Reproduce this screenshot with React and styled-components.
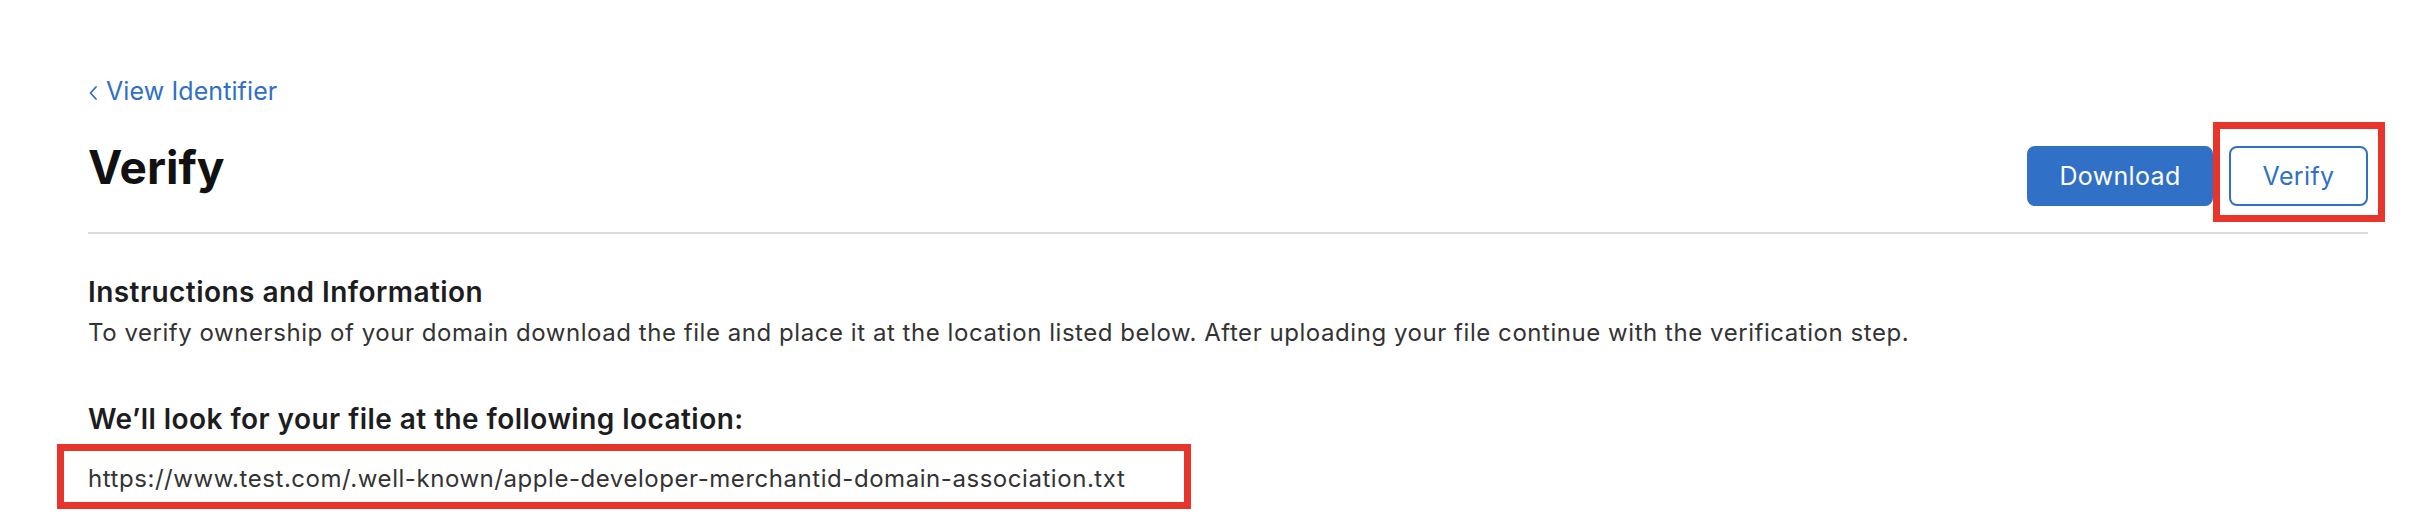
import React from "react";
import styled, { createGlobalStyle } from "styled-components";

const GlobalStyle = createGlobalStyle`
  html, body {
    margin: 0;
    padding: 0;
    background: #fff;
  }
  body {
    font-family: Inter, "Noto Sans", "Liberation Sans", sans-serif;
    color: #1d1d1f;
    -webkit-font-smoothing: antialiased;
  }
`;

const Page = styled.main`
  padding: 75px 58px 0 88px;
`;

const BackLink = styled.a`
  display: inline-flex;
  align-items: center;
  gap: 8px;
  font-size: 25px;
  line-height: 32px;
  letter-spacing: 0.1px;
  color: #3070c6;
  text-decoration: none;
  cursor: pointer;
  svg {
    width: 10px;
    height: 16px;
    margin-top: 3px;
  }
`;

const Header = styled.div`
  display: flex;
  justify-content: space-between;
  align-items: flex-start;
  padding: 32px 0 26px;
  border-bottom: 2px solid #dcdcdc;
`;

const Title = styled.h1`
  margin: 0;
  font-size: 46px;
  line-height: 56px;
  font-weight: 700;
  color: #111;
`;

const Actions = styled.div`
  display: flex;
  gap: 16px;
  margin-top: 7px;
`;

const Button = styled.button`
  position: relative;
  box-sizing: border-box;
  height: 60px;
  min-width: ${(p) => p.$w}px;
  padding: 0 30px;
  border-radius: 8px;
  font-family: inherit;
  font-size: 25px;
  letter-spacing: 0.35px;
  font-weight: 400;
  cursor: pointer;
  border: 2px solid #3070c6;
  background: ${(p) => (p.$primary ? "#3070c6" : "#fff")};
  color: ${(p) => (p.$primary ? "#fff" : "#3070c6")};
`;

const Highlight = styled.span`
  position: relative;
  display: inline-flex;
  &::after {
    content: "";
    position: absolute;
    left: -16px;
    right: -17px;
    top: -24px;
    bottom: -16px;
    border: 7px solid #e8352b;
    pointer-events: none;
  }
`;

const Section = styled.section`
  margin-top: 41px;
`;

const Heading = styled.h2`
  margin: 0;
  font-size: 28px;
  line-height: 34px;
  letter-spacing: 0.45px;
  font-weight: 600;
  color: #1d1d1f;
`;

const Text = styled.p`
  margin: 9px 0 0;
  font-size: 24px;
  line-height: 30px;
  letter-spacing: 0.55px;
  color: #333;
`;

const LocationHeading = styled(Heading)`
  margin-top: 54px;
`;

const UrlBox = styled.div`
  box-sizing: border-box;
  width: 1134px;
  margin: 8px 0 0 -31px;
  padding: 4px 0 0 24px;
  border: 7px solid #e8352b;
  font-size: 24px;
  line-height: 47px;
  letter-spacing: 0.55px;
  color: #333;
`;

export default function App() {
  return (
    <>
      <GlobalStyle />
      <Page>
        <BackLink>
          <svg viewBox="0 0 10 16" fill="none">
            <path d="M8 2 L2.5 8 L8 14" stroke="#3070c6" strokeWidth="1.8" strokeLinecap="round" strokeLinejoin="round" />
          </svg>
          View Identifier
        </BackLink>
        <Header>
          <Title>Verify</Title>
          <Actions>
            <Button $primary $w={186}>Download</Button>
            <Highlight>
              <Button $w={139}>Verify</Button>
            </Highlight>
          </Actions>
        </Header>
        <Section>
          <Heading>Instructions and Information</Heading>
          <Text>
            To verify ownership of your domain download the file and place it at the location listed below. After uploading your file continue with the verification step.
          </Text>
          <LocationHeading>We’ll look for your file at the following location:</LocationHeading>
          <UrlBox>https://www.test.com/.well-known/apple-developer-merchantid-domain-association.txt</UrlBox>
        </Section>
      </Page>
    </>
  );
}
